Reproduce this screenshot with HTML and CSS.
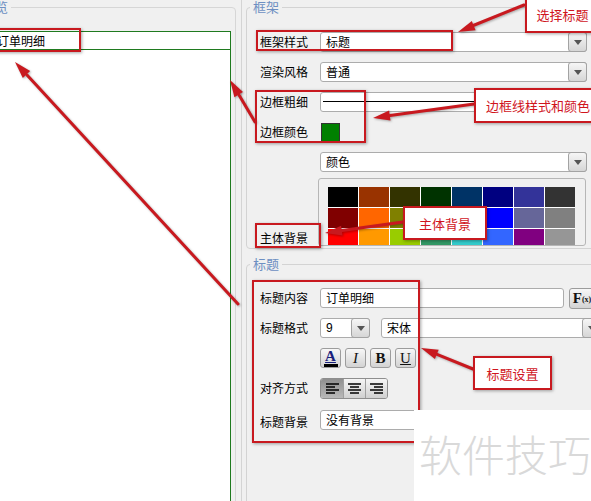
FILE: index.html
```html
<!DOCTYPE html>
<html lang="zh-CN">
<head>
<meta charset="utf-8">
<title>标题设置</title>
<link rel="stylesheet" href="styles.css">
</head>
<body>
<div class="app">
  <div class="preview-col">
    <fieldset class="pv-group">
      <legend>预览</legend>
      <div class="pv-box">
        <div class="pv-title">订单明细</div>
      </div>
    </fieldset>
  </div>
  <div class="splitter"></div>
  <div class="props">
    <fieldset class="group g-frame">
      <legend>框架</legend>
      <div class="row">
        <span class="lbl">框架样式</span>
        <div class="sel w-main"><span class="txt">标题</span><i class="dd"></i></div>
      </div>
      <div class="row">
        <span class="lbl">渲染风格</span>
        <div class="sel w-main"><span class="txt">普通</span><i class="dd"></i></div>
      </div>
      <div class="row">
        <span class="lbl">边框粗细</span>
        <div class="linebox"><span class="stroke"></span></div>
      </div>
      <div class="row">
        <span class="lbl">边框颜色</span>
        <span class="swatch"></span>
      </div>
      <div class="row row-tight">
        <span class="lbl"></span>
        <div class="sel w-main"><span class="txt">颜色</span><i class="dd"></i></div>
      </div>
      <div class="prow">
        <span class="lbl plbl">主体背景</span>
        <div class="palette">
          <div class="grid">
            <span class="c" style="background:#000000"></span>
            <span class="c" style="background:#993300"></span>
            <span class="c" style="background:#333300"></span>
            <span class="c" style="background:#003300"></span>
            <span class="c" style="background:#003366"></span>
            <span class="c" style="background:#000080"></span>
            <span class="c" style="background:#333399"></span>
            <span class="c" style="background:#333333"></span>
            <span class="c" style="background:#800000"></span>
            <span class="c" style="background:#ff6600"></span>
            <span class="c" style="background:#808000"></span>
            <span class="c" style="background:#008000"></span>
            <span class="c" style="background:#008080"></span>
            <span class="c" style="background:#0000ff"></span>
            <span class="c" style="background:#666699"></span>
            <span class="c" style="background:#808080"></span>
            <span class="c" style="background:#ff0000"></span>
            <span class="c" style="background:#ff9900"></span>
            <span class="c" style="background:#99cc00"></span>
            <span class="c" style="background:#339966"></span>
            <span class="c" style="background:#33cccc"></span>
            <span class="c" style="background:#3366ff"></span>
            <span class="c" style="background:#800080"></span>
            <span class="c" style="background:#969696"></span>
          </div>
        </div>
      </div>
    </fieldset>

    <fieldset class="group g-title">
      <legend>标题</legend>
      <div class="row">
        <span class="lbl">标题内容</span>
        <div class="inp"><span class="txt">订单明细</span></div>
        <div class="btn fx"><b>F</b><small>(x)</small></div>
      </div>
      <div class="row">
        <span class="lbl">标题格式</span>
        <div class="sel w-size"><span class="txt num">9</span><i class="dd"></i></div>
        <div class="sel w-font"><span class="txt">宋体</span><i class="dd"></i></div>
      </div>
      <div class="row">
        <span class="lbl"></span>
        <div class="btns">
          <div class="btn fmt f-color"><span class="a">A</span><span class="bar"></span></div>
          <div class="btn fmt f-i">I</div>
          <div class="btn fmt f-b">B</div>
          <div class="btn fmt f-u">U</div>
        </div>
      </div>
      <div class="row row-align">
        <span class="lbl">对齐方式</span>
        <div class="seg">
          <div class="seg-i on">
            <svg width="13" height="11" viewBox="0 0 13 11"><g stroke="#000" stroke-width="1.3"><line x1="0" y1="1" x2="13" y2="1"/><line x1="0" y1="4" x2="9" y2="4"/><line x1="0" y1="7" x2="13" y2="7"/><line x1="0" y1="10" x2="9" y2="10"/></g></svg>
          </div>
          <div class="seg-i">
            <svg width="13" height="11" viewBox="0 0 13 11"><g stroke="#000" stroke-width="1.3"><line x1="0" y1="1" x2="13" y2="1"/><line x1="2" y1="4" x2="11" y2="4"/><line x1="0" y1="7" x2="13" y2="7"/><line x1="2" y1="10" x2="11" y2="10"/></g></svg>
          </div>
          <div class="seg-i">
            <svg width="13" height="11" viewBox="0 0 13 11"><g stroke="#000" stroke-width="1.3"><line x1="0" y1="1" x2="13" y2="1"/><line x1="4" y1="4" x2="13" y2="4"/><line x1="0" y1="7" x2="13" y2="7"/><line x1="4" y1="10" x2="13" y2="10"/></g></svg>
          </div>
        </div>
      </div>
      <div class="row">
        <span class="lbl lbl-low">标题背景</span>
        <div class="sel w-bg"><span class="txt">没有背景</span><i class="dd"></i></div>
      </div>
    </fieldset>
  </div>
</div>

<div class="overlay">
  <svg class="arrows" width="591" height="501" viewBox="0 0 591 501">
    <g stroke="#c8191f" stroke-width="3" fill="none" stroke-linecap="round">
      <line x1="524" y1="5" x2="472" y2="26"/>
      <line x1="474" y1="104" x2="390" y2="115.5"/>
      <line x1="403" y1="222" x2="342" y2="230.6"/>
      <line x1="473" y1="369" x2="437" y2="354.4"/>
      <line x1="238" y1="304" x2="27" y2="75"/>
      <line x1="255" y1="122" x2="239" y2="95"/>
    </g>
    <g fill="#c8191f">
      <polygon points="458,32 471.8,21 475.6,30.2"/>
      <polygon points="373,118 389.1,110.6 390.5,120.4"/>
      <polygon points="325,233 341.1,225.7 342.5,235.6"/>
      <polygon points="421,348 438.7,349.8 434.9,359"/>
      <polygon points="15,62 30.2,71.1 22.8,77.9"/>
      <polygon points="230,80 243,92 234.4,97.2"/>
    </g>
  </svg>
  <div class="mark m1"></div>
  <div class="mark m2"></div>
  <div class="mark m3"></div>
  <div class="mark m4"></div>
  <div class="mark m5"></div>
  <div class="note n1">选择标题</div>
  <div class="note n2">边框线样式和颜色</div>
  <div class="note n3">主体背景</div>
  <div class="note n4">标题设置</div>
</div>

<div class="watermark">软件技巧</div>
</body>
</html>
```

FILE: styles.css
```css
* { box-sizing: border-box; }
html, body { margin: 0; padding: 0; }
body {
  width: 591px;
  height: 501px;
  overflow: hidden;
  position: relative;
  background: #f0f0f0;
  font-family: "Noto Sans CJK SC", "Noto Sans", sans-serif;
  font-size: 12px;
  color: #000;
}

.app { display: flex; width: 600px; height: 501px; overflow: hidden; }

/* preview column */
.preview-col { width: 241px; height: 501px; flex: none; overflow: hidden; }
.pv-group {
  margin: 0 0 0 -30px;
  padding: 0;
  width: 266px;
  height: 510px;
  border: 1px solid #d6d6d6;
  border-radius: 4px;
  min-inline-size: 0;
}
.pv-group legend, .group legend {
  font-size: 13px;
  line-height: 14px;
  color: #6d8fc2;
  padding: 0 3px;
}
.pv-group legend { margin-left: 8px; }
.pv-box {
  margin-top: 17px;
  width: 260px;
  height: 475px;
  background: #fff;
  border-top: 1px solid #1f7a1f;
  border-right: 1px solid #1f7a1f;
}
.pv-title {
  height: 18px;
  border-bottom: 1px solid #1f7a1f;
  padding-left: 26px;
  line-height: 17px;
  font-size: 12px;
  white-space: nowrap;
}

.splitter { width: 1px; flex: none; background: #d4d4d4; }

/* property panel */
.props { padding-left: 4px; width: 358px; height: 501px; flex: none; overflow: hidden; }
.group {
  margin: 0;
  border: 1px solid #d3d3d3;
  border-radius: 4px;
  padding: 18px 0 2px 13px;
  min-inline-size: 0;
}
.group legend { margin-left: -10px; }
.g-title { margin-top: 8px; padding-top: 17px; height: 260px; }

.row { display: flex; align-items: center; height: 20px; margin-bottom: 10px; }
.row-tight { margin-bottom: 6px; }
.row-align { margin-bottom: 12px; }
.lbl { width: 60px; flex: none; white-space: nowrap; line-height: 16px; }
.lbl-low { padding-top: 4px; }

.sel, .inp {
  height: 20px;
  display: flex;
  align-items: center;
  background: #fff;
  border: 1px solid #acacac;
  border-radius: 3px;
  flex: none;
}
.txt { flex: 1; padding-left: 5px; white-space: nowrap; line-height: 16px; }
.num { font-family: "Liberation Sans", Arial, sans-serif; font-size: 12px; }
.dd {
  width: 19px;
  height: 20px;
  margin: -1px -1px -1px 0;
  flex: none;
  border: 1px solid #a3a3a3;
  border-radius: 3px;
  background: linear-gradient(#f6f6f6, #d6d6d6);
  display: flex;
  align-items: center;
  justify-content: center;
}
.dd::after {
  content: "";
  width: 0;
  height: 0;
  border-left: 4px solid transparent;
  border-right: 4px solid transparent;
  border-top: 5px solid #555;
}
.w-main { width: 267px; }
.w-size { width: 50px; }
.w-font { width: 220px; margin-left: 11px; }
.w-bg { width: 280px; }

.linebox {
  width: 280px;
  height: 20px;
  background: #fff;
  border: 1px solid #acacac;
  border-radius: 3px 0 0 3px;
  display: flex;
  align-items: center;
  padding-left: 2px;
}
.stroke { display: block; height: 1px; flex: 1; background: #000; margin-bottom: 1px; }

.swatch {
  width: 19px;
  height: 19px;
  background: #008000;
  border: 1px solid #333;
  margin-left: 1px;
}

.prow { display: flex; align-items: flex-end; height: 68px; }
.plbl { width: 58px; margin-bottom: 0; line-height: 16px; }
.palette {
  width: 268px;
  height: 68px;
  border: 1px solid #b6b6b6;
  border-radius: 3px;
  overflow: hidden;
  padding: 8px 0 0 9px;
  background: #f0f0f0;
}
.grid {
  display: grid;
  grid-template-columns: repeat(8, 30px);
  grid-auto-rows: 20px;
  gap: 1px;
  width: 247px;
  background: #fff;
}
.c { display: block; }

.inp { width: 244px; }
.btn {
  border: 1px solid #9c9c9c;
  border-radius: 3px;
  background: linear-gradient(#f7f7f7, #d3d3d3);
  display: flex;
  align-items: center;
  justify-content: center;
  flex: none;
}
.fx {
  width: 26px;
  height: 21px;
  margin-left: 5px;
  font-family: "Liberation Serif", serif;
  color: #111;
}
.fx b { font-size: 15px; line-height: 15px; }
.fx small { font-size: 8px; font-weight: bold; line-height: 10px; margin-top: 4px; }

.btns { display: flex; gap: 4px; }
.fmt {
  width: 21px;
  height: 20px;
  font-family: "Liberation Serif", serif;
  font-size: 15px;
  color: #111;
}
.f-color { flex-direction: column; justify-content: flex-start; padding-top: 1px; }
.f-color .a { color: #18207c; font-weight: bold; font-size: 15px; line-height: 13px; text-decoration: underline; text-decoration-thickness: 1px; text-underline-offset: 1px; }
.f-color .bar { display: block; width: 14px; height: 3px; background: #000; margin-top: 1px; }
.f-i { font-style: italic; }
.f-b { font-weight: bold; }
.f-u { text-decoration: underline; }

.seg {
  display: flex;
  height: 21px;
  border: 1px solid #8e8e8e;
  border-radius: 3px;
  overflow: hidden;
}
.seg-i {
  width: 22px;
  display: flex;
  align-items: center;
  justify-content: center;
  background: linear-gradient(#f5f5f5, #d0d0d0);
  border-left: 1px solid #a0a0a0;
}
.seg-i:first-child { border-left: 0; }
.seg-i.on { background: linear-gradient(#8f8f8f, #b9b9b9); }

/* annotation layer */
.overlay {
  position: absolute;
  left: 0;
  top: 0;
  width: 591px;
  height: 501px;
  overflow: hidden;
  pointer-events: none;
}
.arrows { position: absolute; left: 0; top: 0; filter: drop-shadow(1px 1px 1px rgba(0,0,0,0.3)); }
.mark {
  position: absolute;
  border: 2px solid #c8191f;
  box-shadow: 1px 1px 3px rgba(0,0,0,0.35);
}
.m1 { left: 256px; top: 30px; width: 197px; height: 21px; }
.m2 { left: 255px; top: 90px; width: 111px; height: 53px; }
.m3 { left: 255px; top: 223px; width: 66px; height: 25px; }
.m4 { left: 252px; top: 280px; width: 168px; height: 163px; }
.m5 { left: -5px; top: 28px; width: 86px; height: 24px; }
.note {
  position: absolute;
  background: #fff;
  border: 2px solid #c8191f;
  color: #d0151d;
  font-size: 13px;
  display: flex;
  align-items: center;
  justify-content: center;
  white-space: nowrap;
  box-shadow: 1px 1px 3px rgba(0,0,0,0.35);
}
.n1 { left: 525px; top: -5px; width: 75px; height: 38px; }
.n2 { left: 474px; top: 88px; width: 128px; height: 35px; }
.n3 { left: 403px; top: 206px; width: 84px; height: 34px; }
.n4 { left: 473px; top: 356px; width: 79px; height: 34px; }

.watermark {
  position: absolute;
  left: 414px;
  top: 410px;
  width: 177px;
  height: 91px;
  overflow: hidden;
  background: #fff;
  color: #d9d9d9;
  font-size: 43px;
  font-weight: 300;
  line-height: 43px;
  padding: 22px 0 0 5px;
  white-space: nowrap;
}
```
